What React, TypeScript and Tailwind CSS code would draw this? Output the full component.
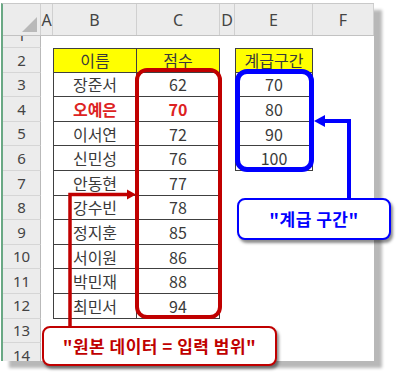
import React from 'react'

const names = [
  { row: 3, name: '장준서', score: 62 },
  { row: 4, name: '오예은', score: 70, hot: true },
  { row: 5, name: '이서연', score: 72 },
  { row: 6, name: '신민성', score: 76 },
  { row: 7, name: '안동현', score: 77 },
  { row: 8, name: '강수빈', score: 78 },
  { row: 9, name: '정지훈', score: 85 },
  { row: 10, name: '서이원', score: 86 },
  { row: 11, name: '박민재', score: 88 },
  { row: 12, name: '최민서', score: 94 },
]

const bins: Record<number, number> = { 3: 70, 4: 80, 5: 90, 6: 100 }

const cellFont = "font-['Noto_Sans_CJK_KR','Noto_Sans',sans-serif] text-[16px] leading-none text-[#3a3a3a]"

function RowHead({ n }: { n: number }) {
  return (
    <div className="w-[38px] h-full shrink-0 flex items-center justify-center bg-[#ececec] border-r border-b border-r-[#b9b9b9] border-b-[#d6d6d6] font-['Noto_Sans',sans-serif] text-[15px] text-[#444]">
      {n}
    </div>
  )
}

function SheetRow({ n }: { n: number }) {
  const item = names.find(r => r.row === n)
  const inTable = n >= 2 && n <= 12
  const inBins = n >= 2 && n <= 6
  const top = n === 2 ? 'border-t' : ''
  return (
    <div className="flex h-[24.6px] shrink-0">
      <RowHead n={n} />
      <div className="w-[12px] shrink-0" />
      {/* B */}
      <div className={`w-[84px] shrink-0 flex items-center justify-center ${cellFont} ${inTable ? `border-l border-r border-b border-[#404040] ${top}` : ''} ${n === 2 ? 'bg-[#ffff00]' : ''}`}>
        {n === 2 ? '이름' : item ? <span className={item.hot ? 'font-bold text-[#dd2222]' : ''}>{item.name}</span> : null}
      </div>
      {/* C */}
      <div className={`w-[83px] shrink-0 flex items-center justify-center ${cellFont} ${inTable ? `border-r border-b border-[#404040] ${top}` : ''} ${n === 2 ? 'bg-[#ffff00]' : ''}`}>
        {n === 2 ? '점수' : item ? <span className={item.hot ? 'font-bold text-[#dd2222]' : ''}>{item.score}</span> : null}
      </div>
      <div className="w-[15px] shrink-0" />
      {/* E */}
      <div className={`w-[78px] shrink-0 flex items-center justify-center ${cellFont} ${inBins ? `border-l border-r border-b border-[#404040] ${top}` : ''} ${n === 2 ? 'bg-[#ffff00]' : ''}`}>
        {n === 2 ? '계급구간' : bins[n] ?? null}
      </div>
      <div className="flex-1" />
    </div>
  )
}

const colHeads = [
  { label: 'A', w: 'w-[12px]' },
  { label: 'B', w: 'w-[84px]' },
  { label: 'C', w: 'w-[83px]' },
  { label: 'D', w: 'w-[15px]' },
  { label: 'E', w: 'w-[78px]' },
  { label: 'F', w: 'flex-1' },
]

export default function App() {
  return (
    <div className="relative w-[400px] h-[377px] bg-white overflow-hidden">
      <div className="pt-[3px] pl-[1px]">
        <div className="w-[373px] h-[358px] overflow-hidden bg-white border-l-2 border-t border-l-[#6aa884] border-t-[#c9c9c9] shadow-[8px_7px_3px_rgba(0,0,0,0.28)] flex flex-col">
          {/* column headers */}
          <div className="flex h-[32px] shrink-0 bg-[#ececec] border-b border-[#c2c2c2]">
            <div className="w-[38px] shrink-0 relative border-r border-[#d0d0d0]">
              <svg className="absolute right-[3px] bottom-[3px]" width="15" height="15" viewBox="0 0 15 15">
                <polygon points="15,0 15,15 0,15" fill="#b9b9b9" />
              </svg>
            </div>
            {colHeads.map(c => (
              <div key={c.label} className={`${c.w} shrink-0 flex items-center justify-center border-r border-[#d0d0d0] font-['Noto_Sans',sans-serif] text-[16px] text-[#444]`}>
                {c.label}
              </div>
            ))}
          </div>
          {/* row 1, scrolled half out of view */}
          <div className="flex h-[12px] shrink-0">
            <div className="w-[38px] h-full shrink-0 overflow-hidden bg-[#ececec] border-r border-b border-r-[#b9b9b9] border-b-[#d6d6d6]">
              <div className="h-[24.6px] -mt-[13px] flex items-center justify-center font-['Noto_Sans',sans-serif] text-[15px] text-[#444]">1</div>
            </div>
          </div>
          {[2, 3, 4, 5, 6, 7, 8, 9, 10, 11, 12, 13, 14].map(n => (
            <SheetRow key={n} n={n} />
          ))}
        </div>
      </div>

      {/* highlight boxes */}
      <div className="absolute left-[135px] top-[68px] w-[87px] h-[251px] border-4 border-[#c00000] rounded-[12px]" />
      <div className="absolute left-[235px] top-[69px] w-[79px] h-[103px] border-[5px] border-[#0000ff] rounded-[12px]" />

      {/* connectors */}
      <svg className="absolute left-0 top-0" width="400" height="377" viewBox="0 0 400 377">
        <polyline points="70,327 70,194.5 128,194.5" fill="none" stroke="#c00000" strokeWidth="3.5" />
        <polygon points="127,189.5 136,194.5 127,199.5" fill="#c00000" />
        <polyline points="349,199 349,121 323,121" fill="none" stroke="#0000ff" strokeWidth="4" />
        <polygon points="325,115 314,121 325,127" fill="#0000ff" />
      </svg>

      {/* callouts */}
      <div className="absolute left-[42px] top-[326px] w-[235px] h-[40px] bg-white border-2 border-[#c00000] rounded-[8px] shadow-[2px_3px_3px_rgba(0,0,0,0.45)] flex items-center justify-center font-['Noto_Sans_CJK_KR',sans-serif] font-bold text-[17px] tracking-[0.5px] text-[#c00000]">
        "원본 데이터 = 입력 범위"
      </div>
      <div className="absolute left-[237px] top-[198px] w-[154px] h-[42px] bg-white border-2 border-[#0000ff] rounded-[8px] shadow-[2px_3px_3px_rgba(0,0,0,0.45)] flex items-center justify-center font-['Noto_Sans_CJK_KR',sans-serif] font-bold text-[17px] tracking-[0.5px] text-[#0000ff]">
        "계급 구간"
      </div>
    </div>
  )
}
